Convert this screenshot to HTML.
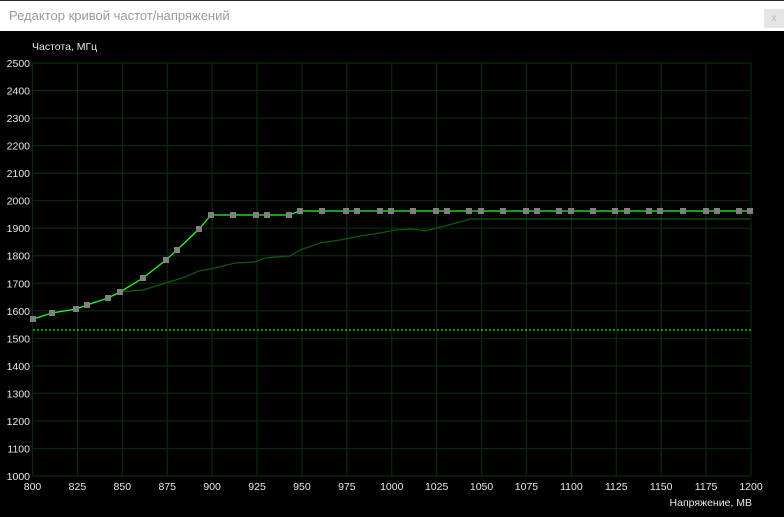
<!DOCTYPE html>
<html><head><meta charset="utf-8"><style>
html,body{margin:0;padding:0;width:784px;height:517px;overflow:hidden;background:#000;font-family:"Liberation Sans",Arial,sans-serif}
#tb{position:absolute;left:0;top:0;width:784px;height:31px;background:#fff;border-top:1px solid #2b2b2b;box-sizing:border-box}
#tt{position:absolute;left:9px;top:7px;font-size:13px;color:#9a9a9a}
#cl{position:absolute;left:764px;top:8px;width:20px;height:19px;background:#e5e5e5;color:#bbb;font-size:10px;text-align:center;line-height:19px}
</style></head><body>
<div id="tb"><div id="tt">Редактор кривой частот/напряжений</div><div id="cl">x</div></div>
<svg width="784" height="517" style="position:absolute;left:0;top:0" font-family="Liberation Sans, Arial, sans-serif" font-size="10.5">
<rect x="0" y="31" width="784" height="486" fill="#000"/>
<g stroke="#0b2a0b" stroke-width="1.2" fill="none" id="grid"></g>
<g fill="#e6e6e6" id="lbl"></g>
<text x="32" y="50" fill="#e6e6e6">Частота, МГц</text>
<text x="752" y="506" fill="#e6e6e6" text-anchor="end">Напряжение, МВ</text>
<line x1="33" y1="330" x2="751" y2="330" stroke="#22ee22" stroke-width="1.3" stroke-dasharray="2,2"/>
<polyline fill="none" stroke="#0c5a0c" stroke-width="1.2" points="120,292 143,290 166,283 185,277 199,271 215,268 235,263 255,262 265,258 290,256 300,250 320,243 340,240 360,236 380,233 395,230 412,229 425,231 445,226 470,219 750,219"/>
<polyline fill="none" stroke="#22ff22" stroke-width="1.3" id="main"/>
<g fill="#808080" id="pts"></g>
</svg>
<script>
var g=document.getElementById('grid'),l=document.getElementById('lbl'),ns='http://www.w3.org/2000/svg';
function el(p,t,a){var e=document.createElementNS(ns,t);for(var k in a)e.setAttribute(k,a[k]);p.appendChild(e);return e;}
var L=32.5,R=751,T=63,B=476;
for(var i=0;i<=15;i++){var y=T+(B-T)*i/15;el(g,'line',{x1:L,x2:R,y1:y,y2:y});var t=el(l,'text',{x:30,y:y+4,'text-anchor':'end'});t.textContent=2500-i*100;}
for(var i=0;i<=16;i++){var x=L+(R-L)*i/16;el(g,'line',{x1:x,x2:x,y1:T,y2:B});var t=el(l,'text',{x:x,y:490,'text-anchor':'middle'});t.textContent=800+i*25;}
var P=[[33,319],[52,313],[76,309],[87,305],[108,298],[120,292],[143,278],[166,260],[177,250],[199,229],[211,215],[233,215],[256,215],[267,215],[289,215],[300,211]];
[322,346,357,380,391,413,436,447,469,481,503,526,537,559,571,593,615,627,649,660,683,706,717,739,750].forEach(function(x){P.push([x,211]);});
document.getElementById('main').setAttribute('points',P.map(function(p){return p.join(',')}).join(' '));
var pg=document.getElementById('pts');P.forEach(function(p){el(pg,'rect',{x:p[0]-3,y:p[1]-3,width:6,height:6});});
</script>
</body></html>
